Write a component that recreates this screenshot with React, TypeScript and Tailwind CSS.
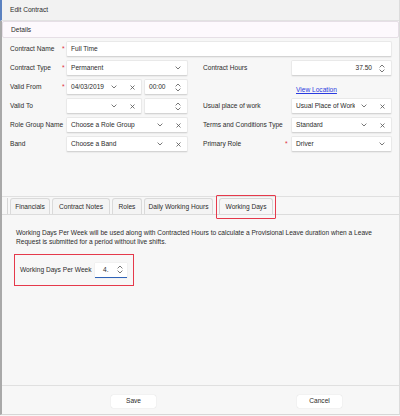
import React from "react";

type Icon = "chev" | "x" | "spin";

function Chevron({ up = false }: { up?: boolean }) {
  return (
    <svg width="6" height="4" viewBox="0 0 6 4" className="block">
      <path
        d={up ? "M0.6 3.4 L3 1 L5.4 3.4" : "M0.6 0.6 L3 3 L5.4 0.6"}
        fill="none"
        stroke="#555"
        strokeWidth="0.8"
      />
    </svg>
  );
}

function Cross() {
  return (
    <svg width="5" height="5" viewBox="0 0 5 5" className="block">
      <path d="M0.5 0.5 L4.5 4.5 M4.5 0.5 L0.5 4.5" fill="none" stroke="#555" strokeWidth="0.8" />
    </svg>
  );
}

function Spinner() {
  return (
    <div className="flex flex-col items-center gap-[1px]">
      <Chevron up />
      <Chevron />
    </div>
  );
}

function Field({
  className = "",
  text = "",
  icons = [],
  right = false,
}: {
  className?: string;
  text?: string;
  icons?: Icon[];
  right?: boolean;
}) {
  return (
    <div
      className={`h-[16px] bg-white rounded-[2px] border border-[#e9e9e9] border-b-[#d4d4d4] shadow-[0_1px_1px_rgba(0,0,0,0.05)] flex items-center ${className}`}
    >
      <div className={`flex-1 pl-[4px] whitespace-nowrap overflow-hidden ${right ? "text-right pr-[1px]" : ""}`}>{text}</div>
      {icons.map((ic, i) => (
        <div key={i} className="w-[18px] shrink-0 flex items-center justify-center">
          {ic === "chev" && <Chevron />}
          {ic === "x" && <Cross />}
          {ic === "spin" && <Spinner />}
        </div>
      ))}
    </div>
  );
}

function Star({ show }: { show?: boolean }) {
  return <div className="w-[4px] text-[#e0303a] leading-none">{show ? "*" : ""}</div>;
}

const tabs = [
  { label: "Financials", w: "w-[40px]" },
  { label: "Contract Notes", w: "w-[58px]" },
  { label: "Roles", w: "w-[30px]" },
  { label: "Daily Working Hours", w: "w-[69px]" },
];

export default function App() {
  return (
    <div className="w-[400px] h-[416px] bg-[#f7f7f7] text-[#2b2b2b] text-[6.6px] font-['Liberation_Sans',Arial,sans-serif]">
      <div className="h-[415px] flex flex-col border-l-2 border-l-[#a9a9a9] border-r border-r-[#dcdcdc] border-b border-b-[#d6d6d6]">
        {/* header */}
        <div className="h-[21px] flex items-center pl-[8px] bg-[#f2f2f2] border-b border-[#e2e2e2] -ml-[2px] border-l-2 border-l-[#5b82c0]">
          Edit Contract
        </div>
        <div className="h-[17px] flex items-center pl-[8px] bg-[#fdf9fd] border border-[#e6dfe6] rounded-[2px]">
          Details
        </div>

        {/* form */}
        <div className="h-[158px] pt-[3px] pl-[8px] flex flex-col gap-[3px]">
          <div className="flex items-center">
            <div className="w-[52px]">Contract Name</div>
            <Star show />
            <Field className="w-[326px]" text="Full Time" />
          </div>
          <div className="flex items-center">
            <div className="w-[52px]">Contract Type</div>
            <Star show />
            <Field className="w-[122px]" text="Permanent" icons={["chev"]} />
            <div className="w-[15px]" />
            <div className="w-[85px]">Contract Hours</div>
            <div className="w-[3px]" />
            <Field className="w-[101px]" text="37.50" right icons={["spin"]} />
          </div>
          <div className="flex items-center">
            <div className="w-[52px]">Valid From</div>
            <Star show />
            <Field className="w-[76px]" text="04/03/2019" icons={["chev", "x"]} />
            <Field className="w-[44px] ml-[2px]" text="00:00" icons={["spin"]} />
            <div className="w-[15px]" />
            <div className="w-[85px]" />
            <div className="w-[3px]" />
            <div className="pl-[5px] pt-[5px] text-[#2a3be0] underline">View Location</div>
          </div>
          <div className="flex items-center">
            <div className="w-[52px]">Valid To</div>
            <Star />
            <Field className="w-[76px]" icons={["chev", "x"]} />
            <Field className="w-[44px] ml-[2px]" icons={["spin"]} />
            <div className="w-[15px]" />
            <div className="w-[85px]">Usual place of work</div>
            <div className="w-[3px]" />
            <Field className="w-[101px]" text="Usual Place of Work" icons={["chev", "x"]} />
          </div>
          <div className="flex items-center">
            <div className="w-[52px] whitespace-nowrap">Role Group Name</div>
            <Star />
            <Field className="w-[122px]" text="Choose a Role Group" icons={["chev", "x"]} />
            <div className="w-[15px]" />
            <div className="w-[85px]">Terms and Conditions Type</div>
            <div className="w-[3px]" />
            <Field className="w-[101px]" text="Standard" icons={["chev", "x"]} />
          </div>
          <div className="flex items-center">
            <div className="w-[52px]">Band</div>
            <Star />
            <Field className="w-[122px]" text="Choose a Band" icons={["chev", "x"]} />
            <div className="w-[15px]" />
            <div className="w-[82px]">Primary Role</div>
            <div className="w-[6px] text-[#e0303a] leading-none">*</div>
            <Field className="w-[101px]" text="Driver" icons={["chev"]} />
          </div>
        </div>

        {/* tabs */}
        <div className="flex-1 flex flex-col border-t border-[#e0e0e0]">
          <div className="h-[18px] pt-[1px] flex items-end border-b border-[#dcdcdc]">
            <div className="w-[1px] h-[16px] bg-[#d6d6d6] ml-[5px]" />
            <div className="flex items-end gap-[2px] ml-[2px]">
              {tabs.map((t) => (
                <div
                  key={t.label}
                  className={`${t.w} h-[16px] flex items-center justify-center bg-[#f4f4f4] border border-b-0 border-[#dadada] rounded-t-[3px]`}
                >
                  {t.label}
                </div>
              ))}
              <div className="relative ml-[4px] w-[54px] h-[16px] flex items-center justify-center bg-[#f7f7f7] border border-b-0 border-[#d6d6d6] rounded-t-[3px]">
                Working Days
                <div className="absolute -left-[4px] -right-[4px] -top-[4px] -bottom-[5px] border-[1.5px] border-[#e5394b] rounded-[1px]" />
              </div>
            </div>
          </div>

          <div className="flex-1 pt-[13px] pl-[12px]">
            <p className="leading-[9px] pl-[2px]">
              Working Days Per Week will be used along with Contracted Hours to calculate a Provisional Leave duration when a Leave
              <br />
              Request is submitted for a period without live shifts.
            </p>
            <div className="mt-[8px] w-[120px] h-[32px] border-[1.5px] border-[#e5394b] flex items-center pl-[5px]">
              <div className="w-[75px] whitespace-nowrap">Working Days Per Week</div>
              <div className="w-[32px] h-[15px] bg-white border-b-[1.5px] border-[#2f63b8] flex items-center shadow-[0_0_1px_rgba(0,0,0,0.15)]">
                <div className="flex-1 pl-[8px]">4.</div>
                <div className="w-[14px] flex justify-center">
                  <Spinner />
                </div>
              </div>
            </div>
          </div>

          {/* footer */}
          <div className="h-[29px] border-t border-[#e0e0e0] flex items-start pt-[9px]">
            <button className="ml-[109px] w-[45px] h-[13px] bg-white rounded-[2px] shadow-[0_0_1px_rgba(0,0,0,0.2)] text-[6.6px] leading-none">
              Save
            </button>
            <button className="ml-[141px] w-[45px] h-[13px] bg-white rounded-[2px] shadow-[0_0_1px_rgba(0,0,0,0.2)] text-[6.6px] leading-none">
              Cancel
            </button>
          </div>
        </div>
      </div>
    </div>
  );
}
